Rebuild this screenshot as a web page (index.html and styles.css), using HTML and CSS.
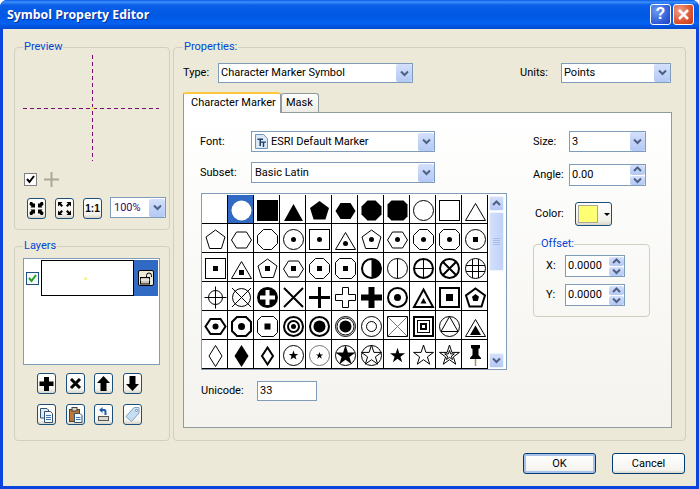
FILE: index.html
```html
<!DOCTYPE html>
<html lang="en">

<head>
    <meta charset="UTF-8">
    <title>Symbol Property Editor</title>
    <link rel="stylesheet" href="styles.css">
</head>

<body>
    <!-- shapes shared by the marker table and the small arrows -->
    <svg class="defs" aria-hidden="true">
        <defs>
            <polygon id="pent" points="13.5,6 23,13 19.4,24.5 7.6,24.5 4,13" />
            <polygon id="hex" points="3.5,16 8.5,8 18.5,8 23.5,16 18.5,24 8.5,24" />
            <polygon id="oct" points="9.5,5.5 17.5,5.5 23.5,11.5 23.5,19.5 17.5,25.5 9.5,25.5 3.5,19.5 3.5,11.5" />
            <polygon id="oct2" points="7.5,5.5 19.5,5.5 23.5,9.5 23.5,21.5 19.5,25.5 7.5,25.5 3.5,21.5 3.5,9.5" />
            <polygon id="tri" points="13.5,8.5 23.5,25.5 3.5,25.5" />
            <polygon id="star" points="13.5,5 15.9,12.4 23.5,12.4 17.4,16.9 19.7,24.2 13.5,19.7 7.3,24.2 9.6,16.9 3.5,12.4 11.1,12.4" />
            <polygon id="sstar" points="13.5,10.5 14.7,13.9 18.3,13.9 15.4,16.1 16.5,19.5 13.5,17.4 10.5,19.5 11.6,16.1 8.7,13.9 12.3,13.9" />
            <circle id="dot" cx="13.5" cy="15.5" r="2.5" />
            <rect id="sq" x="11" y="13" width="5" height="5" />
            <polyline id="chev" points="1,1.5 4.5,5 8,1.5" />
            <polyline id="chevup" points="1,5 4.5,1.5 8,5" />
        </defs>
    </svg>

    <div class="window">
        <div class="titlebar">
            <span class="title">Symbol Property Editor</span>
            <button class="cap cap-help">?</button>
            <button class="cap cap-close">
                <svg width="13" height="13" viewBox="0 0 13 13">
                    <path d="M2 2L11 11M11 2L2 11" />
                </svg>
            </button>
        </div>

        <div class="client">
            <div class="main">
                <div class="left">
                    <fieldset class="group preview-group">
                        <legend>Preview</legend>
                        <svg class="crosshair" width="136" height="106">
                            <line x1="0" y1="53.5" x2="136" y2="53.5" />
                            <line x1="69.5" y1="0" x2="69.5" y2="106" />
                            <rect x="68" y="52" width="3" height="3" />
                        </svg>
                        <div class="guide-row">
                            <span class="check">
                                <svg width="11" height="11" viewBox="0 0 11 11">
                                    <path d="M2 5L4.5 8L9 2" />
                                </svg>
                            </span>
                            <svg class="gray-plus" width="15" height="15" viewBox="0 0 15 15">
                                <path d="M7.5 0V15M0 7.5H15" />
                            </svg>
                        </div>
                        <div class="zoom-row">
                            <button class="tb">
                                <svg width="17" height="19" viewBox="0 0 17 19">
                                    <path class="ik" d="M2 3L4 3L6 5L7 4L7 8.500L2.500 8.500L3.500 7.500L1.500 5.500ZM15 3L13 3L11 5L10 4L10 8.500L14.500 8.500L13.500 7.500L15.500 5.500ZM2 16L4 16L6 14L7 15L7 10.500L2.500 10.500L3.500 11.500L1.500 13.500ZM15 16L13 16L11 14L10 15L10 10.500L14.500 10.500L13.500 11.500L15.500 13.500Z" />
                                </svg>
                            </button>
                            <button class="tb">
                                <svg width="17" height="19" viewBox="0 0 17 19">
                                    <path class="ik" d="M2 3H6.500L5 4.500L7 6.500L5.500 8L3.500 6L2 7.500ZM15 3H10.500L12 4.500L10 6.500L11.500 8L13.500 6L15 7.500ZM2 16H6.500L5 14.500L7 12.500L5.500 11L3.500 13L2 11.500ZM15 16H10.500L12 14.500L10 12.500L11.500 11L13.500 13L15 11.500Z" />
                                </svg>
                            </button>
                            <button class="tb tb-one">1:1</button>
                            <div class="combo combo-zoom">
                                <span class="val">100%</span>
                                <span class="arrow"><svg width="9" height="7"><use href="#chev" /></svg></span>
                            </div>
                        </div>
                    </fieldset>

                    <fieldset class="group layers-group">
                        <legend>Layers</legend>
                        <div class="layer-list">
                            <div class="layer">
                                <span class="check check-layer">
                                    <svg width="11" height="11" viewBox="0 0 11 11">
                                        <path d="M2 5L4.500 8L9 2" />
                                    </svg>
                                </span>
                                <span class="swatch-box"><i></i></span>
                                <span class="layer-sel">
                                    <span class="lock">
                                        <svg width="14" height="13" viewBox="0 0 14 13">
                                            <rect x="1.500" y="5.500" width="9" height="6.500" fill="#c8c4b8" stroke="#000" />
                                            <path d="M7.500 5V3.500A2.500 2.500 0 0 1 12.500 3.500V5" fill="none" stroke="#000" />
                                            <path d="M1.500 8H10.500" stroke="#fff" />
                                        </svg>
                                    </span>
                                </span>
                            </div>
                        </div>
                        <div class="layer-btns">
                            <button class="tb">
                                <svg width="17" height="19" viewBox="0 0 17 19">
                                    <path class="ik" d="M6 3H11V7.500H15.500V12H11V17H6V12H1.500V7.500H6Z" />
                                </svg>
                            </button>
                            <button class="tb">
                                <svg width="17" height="19" viewBox="0 0 17 19">
                                    <path class="is" d="M4 5L13 14M13 5L4 14" />
                                </svg>
                            </button>
                            <button class="tb">
                                <svg width="17" height="19" viewBox="0 0 17 19">
                                    <path class="ik" d="M8.500 2L15 9H11.500V17H5.500V9H2Z" />
                                </svg>
                            </button>
                            <button class="tb">
                                <svg width="17" height="19" viewBox="0 0 17 19">
                                    <path class="ik" d="M8.500 17L15 10H11.500V2H5.500V10H2Z" />
                                </svg>
                            </button>
                            <button class="tb">
                                <svg width="17" height="19" viewBox="0 0 17 19">
                                    <path d="M2.500 3.500H9L10.500 5V13H2.500Z" fill="#dfe9f5" stroke="#33506e" />
                                    <path d="M6.500 6.500H12.500L14.500 8.500V17.500H6.500Z" fill="#f3f7fc" stroke="#33506e" />
                                    <path d="M8 10.500H13M8 12.500H13M8 14.500H13" stroke="#3b74b8" />
                                </svg>
                            </button>
                            <button class="tb">
                                <svg width="17" height="19" viewBox="0 0 17 19">
                                    <rect x="2.500" y="4.500" width="10" height="12" fill="#b9783a" stroke="#5f3b17" />
                                    <rect x="5" y="2.500" width="5" height="3.500" fill="#d5d0c2" stroke="#444" />
                                    <path d="M7.500 8.500H13L15 10.500V17.500H7.500Z" fill="#f4f8fc" stroke="#33506e" />
                                    <path d="M9 12.500H13.500M9 14.500H13.500" stroke="#3b74b8" />
                                </svg>
                            </button>
                            <button class="tb">
                                <svg width="17" height="19" viewBox="0 0 17 19">
                                    <rect x="3.500" y="11.500" width="10" height="4" fill="#dcd9cc" stroke="#555" />
                                    <path d="M4 5L7.500 2V4H9.500Q11.500 4 11.500 7V10H9.500V7Q9.500 6 8.500 6H7.500V8Z" fill="#1f5fb0" />
                                </svg>
                            </button>
                            <button class="tb">
                                <svg width="17" height="19" viewBox="0 0 17 19">
                                    <path d="M10 2.500H15V8L7.500 16.500L2 11.500Z" fill="#c7def2" stroke="#7fa4c4" />
                                    <circle cx="12.500" cy="5.500" r="1" fill="#fff" stroke="#6d8fae" />
                                </svg>
                            </button>
                        </div>
                    </fieldset>
                </div>

                <fieldset class="group props-group">
                    <legend>Properties:</legend>
                    <div class="type-row">
                        <label class="lbl-type">Type:</label>
                        <div class="combo combo-type">
                            <span class="val">Character Marker Symbol</span>
                            <span class="arrow"><svg width="9" height="7"><use href="#chev" /></svg></span>
                        </div>
                        <label class="lbl-units">Units:</label>
                        <div class="combo combo-units">
                            <span class="val">Points</span>
                            <span class="arrow"><svg width="9" height="7"><use href="#chev" /></svg></span>
                        </div>
                    </div>

                    <div class="tabs">
                        <div class="tab tab-on">Character Marker</div>
                        <div class="tab">Mask</div>
                    </div>

                    <div class="panel">
                        <div class="panel-left">
                            <div class="field">
                                <label>Font:</label>
                                <div class="combo combo-font">
                                    <svg class="tt" width="14" height="15" viewBox="0 0 14 15">
                                        <path d="M1.500 0.500H9.500L13.500 4.500V14.500H1.500Z" fill="#dbe8f7" stroke="#6f93b8" />
                                        <path d="M3.500 4.500H9V6H7V12H5.500V6H3.500Z" fill="#1d3f66" />
                                        <path d="M7 7.500H12V8.700H10.200V13H8.800V8.700H7Z" fill="#1d3f66" />
                                    </svg>
                                    <span class="val">ESRI Default Marker</span>
                                    <span class="arrow"><svg width="9" height="7"><use href="#chev" /></svg></span>
                                </div>
                            </div>
                            <div class="field field-subset">
                                <label>Subset:</label>
                                <div class="combo combo-font">
                                    <span class="val">Basic Latin</span>
                                    <span class="arrow"><svg width="9" height="7"><use href="#chev" /></svg></span>
                                </div>
                            </div>

                            <div class="table-wrap">
                                <div class="markers">
                                    <!-- row 1 -->
                                    <div class="cell"></div>
                                    <div class="cell cell-on"><svg><circle class="w" cx="13.500" cy="15.500" r="10" /></svg></div>
                                    <div class="cell"><svg><rect class="k" x="3" y="5" width="21" height="21" /></svg></div>
                                    <div class="cell"><svg><polygon class="k" points="13.500,9 23,26 4,26" /></svg></div>
                                    <div class="cell"><svg><use class="k" href="#pent" /></svg></div>
                                    <div class="cell"><svg><use class="k" href="#hex" /></svg></div>
                                    <div class="cell"><svg><use class="k" href="#oct" /></svg></div>
                                    <div class="cell"><svg><use class="k" href="#oct2" /></svg></div>
                                    <div class="cell"><svg><circle cx="13.500" cy="15.500" r="10" /></svg></div>
                                    <div class="cell"><svg><rect x="3.500" y="5.500" width="20" height="20" /></svg></div>
                                    <div class="cell"><svg><use href="#tri" /></svg></div>
                                    <!-- row 2 -->
                                    <div class="cell"><svg><use href="#pent" /></svg></div>
                                    <div class="cell"><svg><use href="#hex" /></svg></div>
                                    <div class="cell"><svg><use href="#oct" /></svg></div>
                                    <div class="cell"><svg><circle cx="13.500" cy="15.500" r="10" /><use class="k" href="#dot" /></svg></div>
                                    <div class="cell"><svg><rect x="3.500" y="5.500" width="20" height="20" /><use class="k" href="#dot" /></svg></div>
                                    <div class="cell"><svg><use href="#tri" /><circle class="k" cx="13.500" cy="19.500" r="2.500" /></svg></div>
                                    <div class="cell"><svg><use href="#pent" /><use class="k" href="#dot" /></svg></div>
                                    <div class="cell"><svg><use href="#hex" /><use class="k" href="#dot" /></svg></div>
                                    <div class="cell"><svg><use href="#oct" /><use class="k" href="#dot" /></svg></div>
                                    <div class="cell"><svg><use href="#oct2" /><use class="k" href="#dot" /></svg></div>
                                    <div class="cell"><svg><circle cx="13.500" cy="15.500" r="10" /><use class="k" href="#sq" /></svg></div>
                                    <!-- row 3 -->
                                    <div class="cell"><svg><rect x="3.500" y="5.500" width="20" height="20" /><use class="k" href="#sq" /></svg></div>
                                    <div class="cell"><svg><use href="#tri" /><rect class="k" x="11" y="17" width="5" height="5" /></svg></div>
                                    <div class="cell"><svg><use href="#pent" /><use class="k" href="#sq" /></svg></div>
                                    <div class="cell"><svg><use href="#hex" /><use class="k" href="#sq" /></svg></div>
                                    <div class="cell"><svg><use href="#oct" /><use class="k" href="#sq" /></svg></div>
                                    <div class="cell"><svg><use href="#oct2" /><use class="k" href="#sq" /></svg></div>
                                    <div class="cell"><svg><circle class="t" cx="13.500" cy="15.500" r="9.500" /><path class="k" d="M13.500 6A9.500 9.500 0 0 1 13.500 25Z" /></svg></div>
                                    <div class="cell"><svg><circle cx="13.500" cy="15.500" r="10" /><path d="M13.500 5.500V25.500" /></svg></div>
                                    <div class="cell"><svg><circle class="t" cx="13.500" cy="15.500" r="9.500" /><path d="M13.500 5.500V25.500M3.500 15.500H23.500" /></svg></div>
                                    <div class="cell"><svg><circle class="t" cx="13.500" cy="15.500" r="9.500" /><path class="t" d="M7 9L20 22M20 9L7 22" /></svg></div>
                                    <div class="cell"><svg><circle cx="13.500" cy="15.500" r="10" /><path d="M10.500 6V25M16.500 6V25M4 12.500H23M4 18.500H23" /></svg></div>
                                    <!-- row 4 -->
                                    <div class="cell"><svg><circle cx="13.500" cy="15.500" r="7" /><path d="M13.500 4.500V26.500M2.500 15.500H24.500" /></svg></div>
                                    <div class="cell"><svg><circle cx="13.500" cy="15.500" r="9" /><path d="M4 6L23 25M23 6L4 25" /></svg></div>
                                    <div class="cell"><svg><circle class="k" cx="13.500" cy="15.500" r="10.500" /><path class="w" d="M11.500 8H15.500V13.500H21V17.500H15.500V23H11.500V17.500H6V13.500H11.500Z" /></svg></div>
                                    <div class="cell"><svg><path class="t" d="M4 6L23 25M23 6L4 25" /></svg></div>
                                    <div class="cell"><svg><path class="h" d="M13.500 5V26M3 15.500H24" /></svg></div>
                                    <div class="cell"><svg><path d="M10.500 5.500H16.500V12.500H23.500V18.500H16.500V25.500H10.500V18.500H3.500V12.500H10.500Z" /></svg></div>
                                    <div class="cell"><svg><path class="k" d="M10.500 5H16.500V12.500H24V18.500H16.500V26H10.500V18.500H3V12.500H10.500Z" /></svg></div>
                                    <div class="cell"><svg><circle class="t" cx="13.500" cy="15.500" r="9.500" /><circle class="k" cx="13.500" cy="15.500" r="3.500" /></svg></div>
                                    <div class="cell"><svg><polygon class="t" points="13.500,7.500 23,25 4,25" /><polygon class="k" points="13.500,16 16.500,21.500 10.500,21.500" /></svg></div>
                                    <div class="cell"><svg><rect class="t" x="4" y="6" width="19" height="19" /><rect class="k" x="10" y="12" width="7" height="7" /></svg></div>
                                    <div class="cell"><svg><polygon class="t" points="13.500,6.500 23,13.500 19.500,24.500 7.500,24.500 4,13.500" /><polygon class="k" points="13.500,12 17,14.700 15.700,19 11.300,19 10,14.700" /></svg></div>
                                    <!-- row 5 -->
                                    <div class="cell"><svg><polygon class="t" points="3.500,15.500 8.500,8 18.500,8 23.500,15.500 18.500,23 8.500,23" /><circle class="k" cx="13.500" cy="15.500" r="3" /></svg></div>
                                    <div class="cell"><svg><polygon class="t" points="9,6 18,6 23,11 23,20 18,25 9,25 4,20 4,11" /><circle class="k" cx="13.500" cy="15.500" r="3.500" /></svg></div>
                                    <div class="cell"><svg><use href="#oct2" /><rect class="k" x="10.500" y="12.500" width="6" height="6" /></svg></div>
                                    <div class="cell"><svg><circle class="t" cx="13.500" cy="15.500" r="9.500" /><circle class="t" cx="13.500" cy="15.500" r="5.500" /><circle class="k" cx="13.500" cy="15.500" r="2.500" /></svg></div>
                                    <div class="cell"><svg><circle class="t" cx="13.500" cy="15.500" r="9.500" /><circle class="k" cx="13.500" cy="15.500" r="6" /></svg></div>
                                    <div class="cell"><svg><circle cx="13.500" cy="15.500" r="10" /><circle cx="13.500" cy="15.500" r="8.500" /><circle class="k" cx="13.500" cy="15.500" r="6" /></svg></div>
                                    <div class="cell"><svg><circle cx="13.500" cy="15.500" r="10" /><circle cx="13.500" cy="15.500" r="5" /></svg></div>
                                    <div class="cell"><svg><rect x="3.500" y="5.500" width="20" height="20" /><path class="n" d="M3.500 5.500L23.500 25.500M23.500 5.500L3.500 25.500" /></svg></div>
                                    <div class="cell"><svg><rect class="t" x="4" y="6" width="19" height="19" /><rect x="7.500" y="9.500" width="12" height="12" /><rect class="t" x="11" y="13" width="5" height="5" /></svg></div>
                                    <div class="cell"><svg><circle cx="13.500" cy="15.500" r="10" /><polygon points="13.500,5.500 22,20.500 5,20.500" /></svg></div>
                                    <div class="cell"><svg><use href="#tri" /><polygon class="k" points="13.500,14.500 19,24 8,24" /></svg></div>
                                    <!-- row 6 -->
                                    <div class="cell"><svg><polygon points="13.500,5.500 20,16 13.500,26.500 7,16" /></svg></div>
                                    <div class="cell"><svg><polygon class="k" points="13.500,5 20.500,16 13.500,27 6.500,16" /></svg></div>
                                    <div class="cell"><svg><polygon class="t" points="13.500,7.500 19,16 13.500,24.500 8,16" /></svg></div>
                                    <div class="cell"><svg><circle cx="13.500" cy="15.500" r="10" /><use class="k" href="#sstar" /></svg></div>
                                    <div class="cell"><svg><circle class="n" cx="13.500" cy="15.500" r="10" /><g transform="translate(3.400 4) scale(.75)"><use class="k" href="#sstar" /></g></svg></div>
                                    <div class="cell"><svg><circle cx="13.500" cy="15.500" r="10" /><use class="k" href="#star" /></svg></div>
                                    <div class="cell"><svg><circle cx="13.500" cy="15.500" r="10" /><use href="#star" /></svg></div>
                                    <div class="cell"><svg><g transform="translate(3.400 4) scale(.75)"><use class="k" href="#star" /></g></svg></div>
                                    <div class="cell"><svg><use href="#star" /></svg></div>
                                    <div class="cell"><svg><use href="#star" /><use href="#sstar" /></svg></div>
                                    <div class="cell"><svg><path class="k" d="M9 5H18V8L16.500 9V15L19 18V19H8V18L10.500 15V9L9 8Z" /><path class="pin" d="M13.500 19V26" /></svg></div>
                                </div>
                                <div class="scrollbar">
                                    <div class="sb-btn"><svg width="9" height="7"><use href="#chevup" /></svg></div>
                                    <div class="sb-thumb"><i></i></div>
                                    <div class="sb-track"></div>
                                    <div class="sb-btn"><svg width="9" height="7"><use href="#chev" /></svg></div>
                                </div>
                            </div>

                            <div class="field field-unicode">
                                <label>Unicode:</label>
                                <div class="input input-unicode">33</div>
                            </div>
                        </div>

                        <div class="panel-right">
                            <div class="side-field">
                                <label>Size:</label>
                                <div class="combo combo-size">
                                    <span class="val">3</span>
                                    <span class="arrow"><svg width="9" height="7"><use href="#chev" /></svg></span>
                                </div>
                            </div>
                            <div class="side-field side-angle">
                                <label>Angle:</label>
                                <div class="spin spin-angle">
                                    <span class="val">0.00</span>
                                    <span class="spin-btns">
                                        <span><svg width="9" height="7"><use href="#chevup" /></svg></span>
                                        <span><svg width="9" height="7"><use href="#chev" /></svg></span>
                                    </span>
                                </div>
                            </div>
                            <div class="side-field side-color">
                                <label>Color:</label>
                                <button class="color-btn">
                                    <span class="color-chip"></span>
                                    <span class="color-drop"></span>
                                </button>
                            </div>
                            <fieldset class="group offset-group">
                                <legend>Offset:</legend>
                                <div class="offset-row">
                                    <label>X:</label>
                                    <div class="spin spin-offset">
                                        <span class="val">0.0000</span>
                                        <span class="spin-btns">
                                            <span><svg width="9" height="7"><use href="#chevup" /></svg></span>
                                            <span><svg width="9" height="7"><use href="#chev" /></svg></span>
                                        </span>
                                    </div>
                                </div>
                                <div class="offset-row">
                                    <label>Y:</label>
                                    <div class="spin spin-offset">
                                        <span class="val">0.0000</span>
                                        <span class="spin-btns">
                                            <span><svg width="9" height="7"><use href="#chevup" /></svg></span>
                                            <span><svg width="9" height="7"><use href="#chev" /></svg></span>
                                        </span>
                                    </div>
                                </div>
                            </fieldset>
                        </div>
                    </div>
                </fieldset>
            </div>

            <div class="footer">
                <button class="btn btn-default">OK</button>
                <button class="btn">Cancel</button>
            </div>
        </div>
    </div>
</body>

</html>
```

FILE: styles.css
```css
* {
    box-sizing: border-box;
    margin: 0;
    padding: 0;
}

body {
    background: #fff;
    font: 11px/14px Roboto, "Liberation Sans", sans-serif;
    color: #000;
    overflow: hidden;
}

.defs {
    display: block;
    width: 0;
    height: 0;
}

/* window frame */
.window {
    display: flex;
    flex-direction: column;
    width: 699px;
    height: 489px;
    padding: 0 3px 3px;
    background: #0b45dd;
    border-radius: 7px 7px 0 0;
    overflow: hidden;
}

.titlebar {
    display: flex;
    align-items: center;
    flex: none;
    height: 29px;
    margin: 0 -3px;
    padding: 0 5px 1px 7px;
    background: linear-gradient(#0a5ae8 0, #3c8ffb 2px, #0a5fe8 5px, #0058e3 50%, #0461ef 80%, #0148cf 100%);
}

.title {
    flex: 1;
    font: bold 12.300px "Open Sans", sans-serif;
    color: #fff;
    text-shadow: 1px 1px 0 #0a2f9c;
}

.cap {
    display: flex;
    align-items: center;
    justify-content: center;
    width: 21px;
    height: 21px;
    margin-left: 2px;
    border: 1px solid #fff;
    border-radius: 3px;
    font: bold 16px "Liberation Sans", sans-serif;
    color: #fff;
}

.cap-help {
    background: radial-gradient(circle at 30% 30%, #6e9bf0, #2c58d6 70%, #1b3fb8);
}

.cap-close {
    background: radial-gradient(circle at 30% 30%, #f0a088, #dd5430 60%, #c23a18);
}

.cap-close path {
    fill: none;
    stroke: #fff;
    stroke-width: 2.500;
}

.client {
    display: flex;
    flex-direction: column;
    flex: 1;
    padding: 11px 10px 0 11px;
    background: #ece9d8;
}

.main {
    display: flex;
    gap: 3px;
    height: 401px;
}

.left {
    display: flex;
    flex-direction: column;
    flex: none;
    width: 156px;
    gap: 9px;
}

/* group boxes */
.group {
    border: 1px solid #d0d0bf;
    border-radius: 4px;
    min-width: 0;
}

.group legend {
    padding: 0 1px;
    line-height: 14px;
    color: #0046d5;
}

.preview-group {
    flex: none;
    height: 190px;
    padding: 1px 1px 0 8px;
}

.crosshair {
    display: block;
}

.crosshair line {
    stroke: #7a0c74;
    stroke-dasharray: 4 3;
}

.crosshair rect {
    fill: #f2ee4a;
}

.guide-row {
    display: flex;
    align-items: center;
    gap: 7px;
    margin: 11px 0 0 1px;
}

.check {
    display: flex;
    align-items: center;
    justify-content: center;
    flex: none;
    width: 13px;
    height: 13px;
    background: #fff;
    border: 1px solid #7f7f7f;
}

.check path {
    fill: none;
    stroke: #000;
    stroke-width: 2;
}

.gray-plus path {
    fill: none;
    stroke: #aca899;
    stroke-width: 2;
}

.zoom-row {
    display: flex;
    align-items: flex-start;
    gap: 9px;
    margin: 10px 0 0 4px;
}

.zoom-row .tb {
    margin-top: 1px;
}

/* small toolbar button */
.tb {
    display: flex;
    align-items: center;
    justify-content: center;
    flex: none;
    width: 19px;
    height: 21px;
    background: linear-gradient(#fff, #f4f3ee 80%, #d8d4c8);
    border: 1px solid #1c4f7c;
    border-radius: 3px;
    font: bold 10px "Liberation Sans", sans-serif;
}

.ik {
    fill: #000;
}

.is {
    fill: none;
    stroke: #000;
    stroke-width: 3;
}

/* layers */
.layers-group {
    flex: 1;
    padding: 5px 0 0 8px;
}

.layer-list {
    width: 137px;
    height: 107px;
    padding: 1px;
    background: #fff;
    border: 1px solid #7f9db9;
}

.layer {
    display: flex;
    align-items: center;
    height: 36px;
}

.check-layer {
    margin-left: 1px;
    background: #f4f6f8;
    border-color: #1c5180;
}

.check-layer path {
    stroke: #21a121;
}

.swatch-box {
    display: flex;
    align-items: center;
    justify-content: center;
    flex: none;
    width: 93px;
    height: 36px;
    margin-left: 2px;
    padding-right: 4px;
    background: #fff;
    border: 1px solid #000;
}

.swatch-box i {
    display: block;
    width: 3px;
    height: 3px;
    border-radius: 50%;
    background: #f5f27a;
}

.layer-sel {
    display: flex;
    align-items: center;
    justify-content: center;
    flex: none;
    width: 24px;
    height: 36px;
    background: #316ac5;
}

.lock {
    display: flex;
    align-items: center;
    justify-content: center;
    width: 16px;
    height: 16px;
    background: #ece9d8;
    border: 1px solid #000;
    border-radius: 2px;
}

.layer-btns {
    display: grid;
    grid-template-columns: repeat(4, 19px);
    column-gap: 9.700px;
    row-gap: 10px;
    margin: 8px 0 0 14px;
}

/* combo box */
.combo,
.input,
.spin {
    display: flex;
    align-items: center;
    background: #fff;
    border: 1px solid #7f9db9;
}

.val {
    flex: 1;
    padding-left: 2px;
    white-space: nowrap;
}

.arrow,
.spin-btns span,
.sb-btn {
    display: flex;
    align-items: center;
    justify-content: center;
    background: linear-gradient(#d4e0fb, #b3c8f5);
    border-radius: 2px;
}

.arrow {
    flex: none;
    width: 16px;
    height: 18px;
}

.arrow svg,
.spin-btns svg,
.sb-btn svg {
    fill: none;
    stroke: #4d6185;
    stroke-width: 2;
}

.combo-zoom {
    width: 56px;
    height: 21px;
    margin-left: -1px;
}

.combo-zoom .val {
    padding-left: 3px;
    color: #3a0a6a;
}

/* properties */
.props-group {
    flex: 1;
    padding: 9px 0 0 9px;
}

.type-row {
    display: flex;
    align-items: center;
    height: 20px;
}

.lbl-type {
    width: 35px;
}

.combo-type {
    width: 195px;
    height: 20px;
}

.lbl-units {
    width: 41px;
    margin-left: 107px;
}

.combo-units {
    width: 110px;
    height: 20px;
    margin-top: -1px;
}

.tabs {
    position: relative;
    z-index: 1;
    display: flex;
    align-items: flex-end;
    height: 21px;
    margin-top: 9px;
}

.tab {
    height: 19px;
    padding: 2px 5px 0 4px;
    background: linear-gradient(#fff, #ecebe5);
    border: 1px solid #919b9c;
    border-bottom: 0;
    border-radius: 3px 3px 0 0;
    margin-bottom: 1px;
    white-space: nowrap;
}

.tab-on {
    width: 98px;
    height: 21px;
    margin-bottom: 0;
    padding: 2px 0 0 7px;
    background: #fff;
    border: 0;
    border-top: 2px solid #ffc73c;
    border-left: 1px solid #919b9c;
    border-right: 1px solid #919b9c;
}

.panel {
    display: flex;
    gap: 26px;
    width: 489px;
    height: 316px;
    margin-top: -1px;
    padding: 18px 0 0 17px;
    background: linear-gradient(#fff, #f4f3ee);
    border: 1px solid #919b9c;
}

.panel-left {
    flex: none;
    width: 306px;
}

.field {
    display: flex;
    align-items: center;
    height: 21px;
}

.field label {
    width: 50px;
    margin-left: -1px;
}

.field-subset {
    margin-top: 10px;
}

.combo-font {
    width: 184px;
    height: 21px;
    margin-left: 1px;
}

.tt {
    flex: none;
    margin: 0 1px 0 2px;
}

.field-subset .val {
    padding-left: 3px;
}

/* marker table */
.table-wrap {
    display: flex;
    height: 177px;
    margin-top: 10px;
    padding-top: 1px;
    background: #fff;
    border: 1px solid #7f9db9;
}

.markers {
    display: grid;
    grid-template-columns: repeat(11, 26px);
    grid-auto-rows: 29px;
    flex: none;
}

.cell {
    border-right: 1px solid #000;
    border-bottom: 1px solid #000;
}

.cell svg {
    display: block;
    width: 25px;
    height: 28px;
    fill: none;
    stroke: #000;
    stroke-width: 1;
}

.cell-on {
    background: #316ac5;
}

.cell .k {
    fill: #000;
    stroke: none;
}

.cell .w {
    fill: #fff;
    stroke: none;
}

.cell .t {
    stroke-width: 2;
}

.cell .h {
    stroke-width: 3;
}

.cell .n {
    stroke: #777;
}

.cell .pin {
    stroke: #b08c50;
    stroke-width: 1.500;
}

.scrollbar {
    display: flex;
    flex-direction: column;
    width: 17px;
    padding: 1px 0 1px 1px;
}

.sb-btn {
    flex: none;
    width: 15px;
    height: 15px;
    border: 1px solid #eef2fd;
}

.sb-thumb {
    display: flex;
    align-items: center;
    justify-content: center;
    flex: none;
    width: 15px;
    height: 59px;
    margin-top: 1px;
    background: linear-gradient(90deg, #d4e0fb, #c0d2f8);
    border: 1px solid #eef2fd;
    border-radius: 2px;
}

.sb-thumb i {
    display: block;
    width: 7px;
    height: 7px;
    background: repeating-linear-gradient(#a8bde8 0 1px, transparent 1px 2px);
}

.sb-track {
    flex: 1;
}

.field-unicode {
    height: 20px;
    margin-top: 11px;
}

.field-unicode label {
    width: 56px;
    margin-left: 0;
}

.input-unicode {
    width: 60px;
    height: 20px;
    padding-left: 2px;
}

/* size, angle, colour, offset */
.panel-right {
    flex: none;
    width: 118px;
}

.side-field {
    display: flex;
    align-items: center;
}

.side-field label {
    width: 36px;
}

.combo-size {
    width: 77px;
    height: 21px;
}

.combo-size .arrow {
    height: 19px;
    width: 15px;
}

.side-angle {
    margin-top: 12px;
}

.spin-angle {
    width: 77px;
    height: 22px;
}

.spin-btns {
    display: flex;
    flex-direction: column;
    flex: none;
    width: 15px;
    gap: 1px;
}

.spin-btns span {
    height: 9px;
}

.spin-angle .spin-btns span {
    height: 9.500px;
}

.side-color {
    margin-top: 16px;
    margin-left: 2px;
}

.side-color label {
    width: 40px;
}

.color-btn {
    display: flex;
    align-items: center;
    width: 37px;
    height: 24px;
    padding-left: 2px;
    background: linear-gradient(#fff, #f0efe8 80%, #d8d4c8);
    border: 1px solid #1c4f7c;
    border-radius: 3px;
}

.color-chip {
    width: 20px;
    height: 18px;
    background: #ffff73;
    border: 1px solid #a8a89a;
}

.color-drop {
    width: 0;
    height: 0;
    margin-left: 6px;
    border: 3px solid transparent;
    border-top: 3px solid #000;
    border-bottom: 0;
}

.offset-group {
    width: 117px;
    height: 80px;
    margin-top: 11px;
    padding: 4px 0 0 11px;
}

.offset-group legend {
    margin-left: -4px;
    padding: 0;
}

.offset-row {
    display: flex;
    align-items: center;
    height: 22px;
}

.offset-row + .offset-row {
    margin-top: 7px;
}

.offset-row label {
    width: 20px;
    padding-left: 1px;
}

.spin-offset {
    width: 60px;
    height: 22px;
}

.footer {
    display: flex;
    justify-content: flex-end;
    gap: 16px;
    margin-top: 12px;
    padding-right: 1px;
}

.btn {
    width: 73px;
    height: 21px;
    background: linear-gradient(#fff, #f4f3ee 85%, #d9d5c9);
    border: 1px solid #003c74;
    border-radius: 3px;
    font: 11px Roboto, "Liberation Sans", sans-serif;
}

.btn-default {
    box-shadow: inset 0 0 0 2px #a6c1ea;
}
```
